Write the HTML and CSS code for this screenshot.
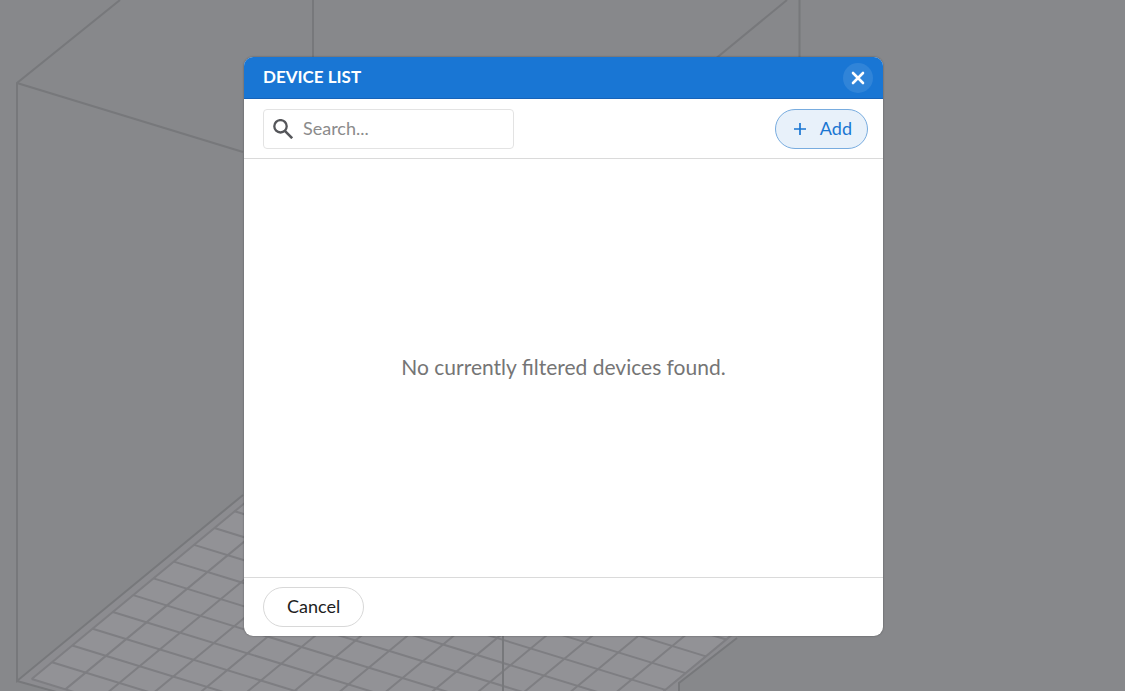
FILE: index.html
```html
<!DOCTYPE html>
<html lang="en">
<head>
<meta charset="utf-8">
<title>Device List</title>
<link rel="stylesheet" href="styles.css">
</head>
<body>
<svg class="scene" width="1125" height="691" aria-hidden="true">
  <path class="plate" d="M17 681 L243 495 L860 540 L679 683 V900 Z"/>
  <path class="bed" d="M32 679 L243 505 L820 560 L503 824 Z"/>
  <g transform="matrix(33.66 10.36 20.3 -16.77 31.7 679)">
    <path class="grid-line" d="M0 0H14M0 1H14M0 2H14M0 3H14M0 4H14M0 5H14M0 6H14M0 7H14M0 8H14M0 9H14M0 10H14M0 11H14M0 12H14"/>
    <path class="grid-line" d="M0 0V14M1 0V14M2 0V14M3 0V14M4 0V14M5 0V14M6 0V14M7 0V14M8 0V14M9 0V14M10 0V14M11 0V14M12 0V14M13 0V14M14 0V14"/>
  </g>
  <path class="frame-line" d="M120 0 L17 83 V681 L243 495 M17 83 L243 152 M17 681 L60 693 M313 0V60 M799.5 0V60 M787 0L714 60 M503 630V691 M737 638L679 683V691"/>
</svg>
<div class="overlay">
  <section class="dialog" role="dialog" aria-labelledby="dialog-title">
    <header class="dialog-header">
      <h1 class="dialog-title" id="dialog-title">DEVICE LIST</h1>
      <button class="close" type="button" aria-label="Close">
        <svg width="14" height="14" viewBox="0 0 14 14"><path d="M2 2L12 12M12 2L2 12" fill="none" stroke="currentColor" stroke-width="2.6" stroke-linecap="round"/></svg>
      </button>
    </header>
    <div class="toolbar">
      <label class="search">
        <svg width="20" height="20" viewBox="0 0 20 20"><circle cx="7.5" cy="7.3" r="6.2" fill="none" stroke="currentColor" stroke-width="2.3"/><path d="M11.6 11.6L19.2 19.2" stroke="currentColor" stroke-width="2.6"/></svg>
        <input class="search-input" type="text" placeholder="Search..." aria-label="Search">
      </label>
      <button class="button button-add" type="button">
        <svg width="12" height="12" viewBox="0 0 12 12"><path d="M6 0V12M0 6H12" stroke="currentColor" stroke-width="1.7"/></svg>
        <span class="button-label">Add</span>
      </button>
    </div>
    <div class="content"><p class="empty">No currently filtered devices found.</p></div>
    <footer class="dialog-footer">
      <button class="button" type="button"><span class="button-label">Cancel</span></button>
    </footer>
  </section>
</div>
</body>
</html>
```
FILE: styles.css
```css
* { box-sizing: border-box; }
body {
  margin: 0;
  background: #87888b;
  font-family: Lato, "Open Sans", sans-serif;
  font-size: 18px;
  overflow: hidden;
}
button, input { font: inherit; }
.scene { position: absolute; top: 0; left: 0; }
.plate { fill: #8c8c90; }
.bed { fill: #929296; }
.grid-line {
  fill: none;
  stroke: #7e7e82;
  stroke-width: 2px;
  vector-effect: non-scaling-stroke;
}
.frame-line { fill: none; stroke: #77787b; stroke-width: 2px; }
.overlay {
  position: relative;
  display: flex;
  justify-content: center;
  height: 100vh;
  padding: 57px 0 55px 2px;
}
.dialog {
  display: flex;
  flex-direction: column;
  width: 639px;
  max-width: 100%;
  overflow: hidden;
  border-radius: 9px;
  background: #fff;
  box-shadow: 0 0 2px rgba(0, 0, 0, 0.4);
}
.dialog-header {
  display: flex;
  align-items: center;
  justify-content: space-between;
  height: 42px;
  padding: 0 10px 0 19px;
  border-bottom: 1px solid #1763b8;
  background: #1976d4;
  color: #fff;
}
.dialog-title {
  margin: 0;
  padding-bottom: 2px;
  font-size: 17px;
  line-height: 20px;
  font-weight: 700;
}
.close {
  display: flex;
  align-items: center;
  justify-content: center;
  width: 30px;
  height: 30px;
  padding: 0;
  border: 0;
  border-radius: 50%;
  background: #3084d8;
  color: #fff;
}
.toolbar {
  display: flex;
  align-items: center;
  justify-content: space-between;
  padding: 10px 15px 9px 19px;
  border-bottom: 1px solid #dadada;
}
.search {
  display: flex;
  align-items: center;
  gap: 10px;
  width: 251px;
  height: 40px;
  padding: 0 9px;
  border: 1px solid #e3e3e3;
  border-radius: 4px;
  color: #55565a;
}
.search svg { flex: none; }
.search-input {
  flex: 1;
  min-width: 0;
  padding: 0 0 2px;
  border: 0;
  outline: 0;
  background: none;
}
.search-input::placeholder { color: #8b8b8b; opacity: 1; }
.button {
  display: flex;
  align-items: center;
  justify-content: center;
  height: 40px;
  padding: 0 23px;
  border: 1px solid #d8d8d8;
  border-radius: 20px;
  background: #fff;
  color: #1e1e1e;
}
.button-label { padding-bottom: 2px; }
.button-add {
  gap: 14px;
  padding: 0 15px 0 18px;
  border-color: #78acdf;
  background: #e8f1fa;
  color: #1976d2;
}
.content {
  flex: 1;
  display: flex;
  align-items: center;
  justify-content: center;
}
.empty {
  margin: 0;
  padding-bottom: 2px;
  font-size: 21px;
  line-height: 26px;
  color: #757575;
}
.dialog-footer { padding: 9px 19px; border-top: 1px solid #dadada; }
```
